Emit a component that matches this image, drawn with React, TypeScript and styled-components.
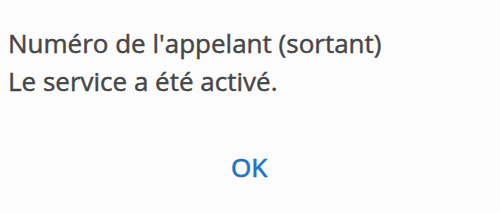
import React from "react";
import styled, { createGlobalStyle } from "styled-components";

const GlobalStyle = createGlobalStyle`
  html, body {
    margin: 0;
    padding: 0;
    background: #fcfcfc;
  }
`;

const Dialog = styled.div`
  width: 500px;
  height: 213px;
  box-sizing: border-box;
  background: #fcfcfc;
  display: flex;
  flex-direction: column;
  font-family: "Open Sans", Roboto, sans-serif;
`;

const Message = styled.div`
  padding: 24px 0 0 8px;
  color: #464646;
  font-size: 26px;
  line-height: 38px;
  -webkit-text-stroke: 0.45px #464646;
`;

const Actions = styled.div`
  display: flex;
  justify-content: center;
  padding-top: 51px;
`;

const OkButton = styled.button`
  border: none;
  background: none;
  padding: 0;
  margin-left: -2px;
  color: #1c74c8;
  font-family: inherit;
  font-size: 26px;
  line-height: 32px;
  -webkit-text-stroke: 0.7px #1c74c8;
`;

export default function App() {
  return (
    <>
      <GlobalStyle />
      <Dialog>
        <Message>
          Numéro de l'appelant (sortant)
          <br />
          Le service a été activé.
        </Message>
        <Actions>
          <OkButton>OK</OkButton>
        </Actions>
      </Dialog>
    </>
  );
}
